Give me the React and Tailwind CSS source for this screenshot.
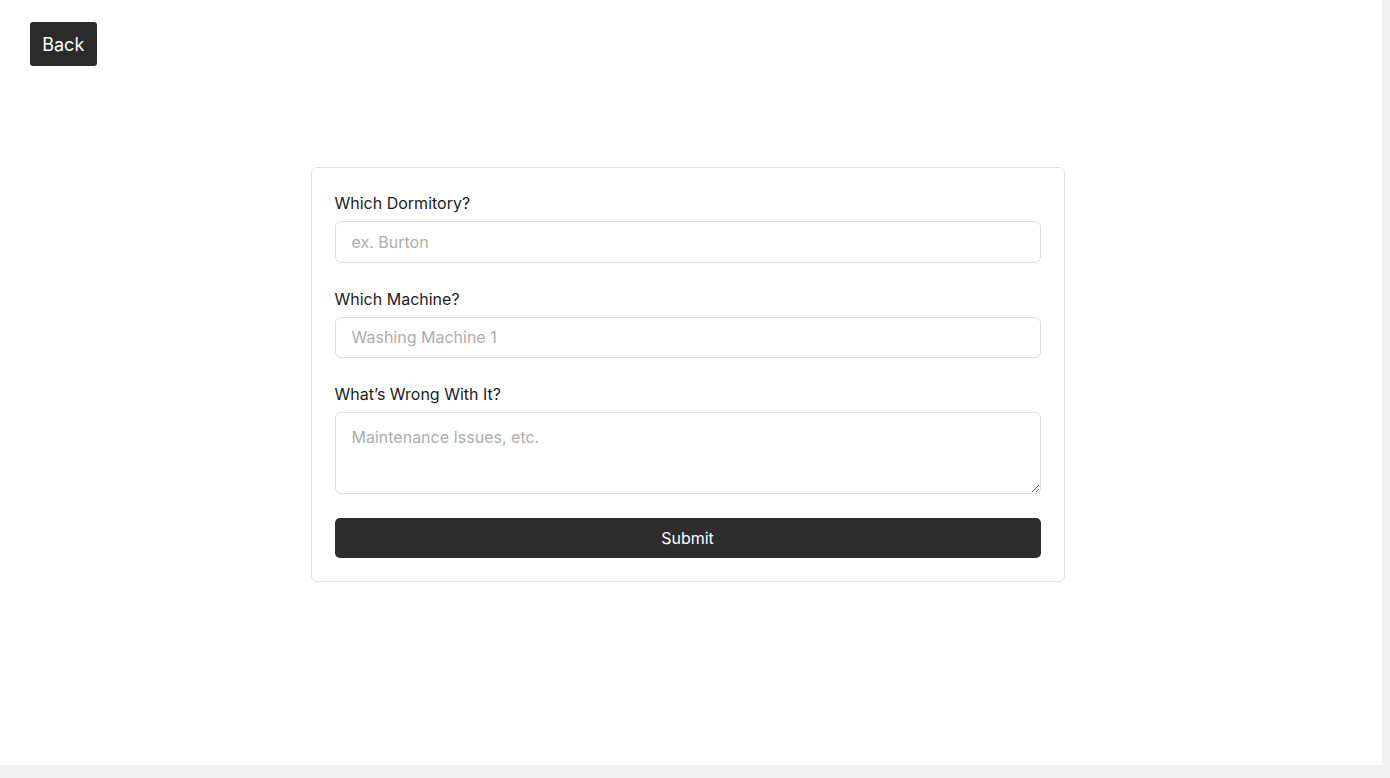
export default function App() {
  return (
    <div className="h-[778px] w-[1390px] bg-[#f1f1f1] overflow-hidden" style={{ fontFamily: 'Inter, "Liberation Sans", sans-serif' }}>
      <div className="h-[765px] w-[1382px] bg-white">
        <div className="pt-[22px] pl-[30px]">
          <button className="h-[43.5px] w-[66.5px] rounded-[3px] bg-[#2b2b2b] pt-[1px] text-[18px] text-white">Back</button>
        </div>

        <div className="mt-[101.5px] flex w-[1375px] justify-center">
          <form className="w-[754px] rounded-[6px] border border-[#e2e2e2] bg-white p-[23px]">
            <label className="block text-[16px] leading-[24px] text-[#1c1c1c]">Which Dormitory?</label>
            <input
              className="mt-[6px] block h-[41.5px] w-full rounded-[6px] border border-[#dedede] px-[16px] text-[16px] outline-none placeholder:text-[#adadad]"
              placeholder="ex. Burton"
            />

            <label className="mt-[24px] block text-[16px] leading-[24px] text-[#1c1c1c]">Which Machine?</label>
            <input
              className="mt-[6px] block h-[41.5px] w-full rounded-[6px] border border-[#dedede] px-[16px] text-[16px] outline-none placeholder:text-[#adadad]"
              placeholder="Washing Machine 1"
            />

            <label className="mt-[24px] block text-[16px] leading-[24px] text-[#1c1c1c]">What’s Wrong With It?</label>
            <textarea
              className="mt-[6px] block h-[81.5px] w-full rounded-[6px] border border-[#dedede] px-[16px] py-[12px] text-[16px] leading-[24px] outline-none placeholder:text-[#adadad]"
              placeholder="Maintenance Issues, etc."
            />

            <button type="button" className="mt-[24px] block h-[40.5px] w-full rounded-[5px] bg-[#2d2d2d] text-[16px] text-white">
              Submit
            </button>
          </form>
        </div>
      </div>
    </div>
  )
}
